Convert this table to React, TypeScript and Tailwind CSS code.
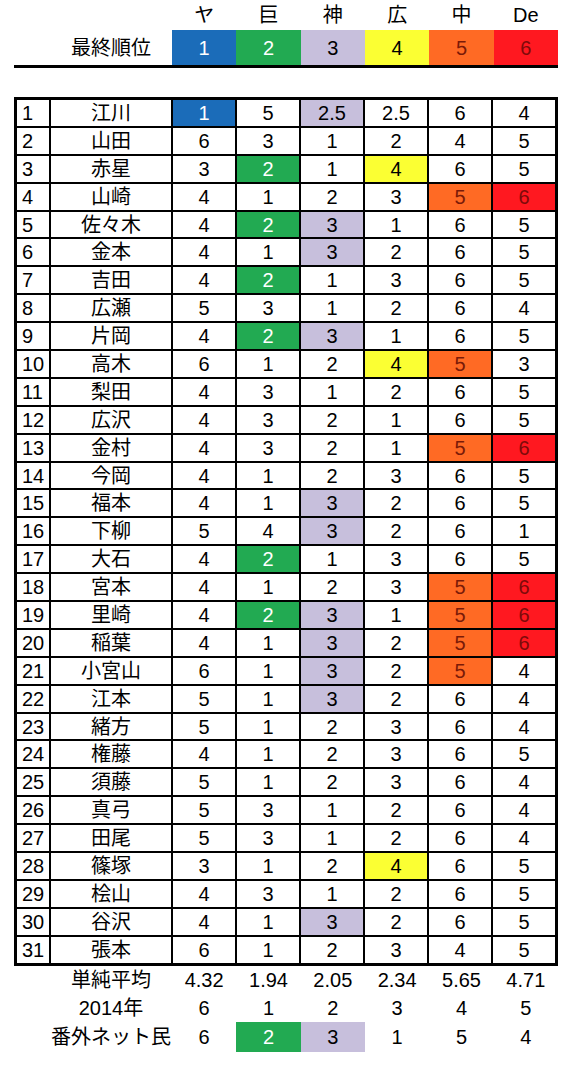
import React from 'react'

const teams = ['ヤ', '巨', '神', '広', '中', 'De']

// colour of a team's final rank cell: bg / text
const rankStyle = [
  'bg-[#1b6cb9] text-white',
  'bg-[#22aa52] text-white',
  'bg-[#c7bfdc] text-black',
  'bg-[#fbff33] text-black',
  'bg-[#ff6a24] text-[#7a1a08]',
  'bg-[#ff1820] text-[#7e0a0a]',
]

const rows: [string, string[]][] = [
  ['江川', ['1', '5', '2.5', '2.5', '6', '4']],
  ['山田', ['6', '3', '1', '2', '4', '5']],
  ['赤星', ['3', '2', '1', '4', '6', '5']],
  ['山崎', ['4', '1', '2', '3', '5', '6']],
  ['佐々木', ['4', '2', '3', '1', '6', '5']],
  ['金本', ['4', '1', '3', '2', '6', '5']],
  ['吉田', ['4', '2', '1', '3', '6', '5']],
  ['広瀬', ['5', '3', '1', '2', '6', '4']],
  ['片岡', ['4', '2', '3', '1', '6', '5']],
  ['高木', ['6', '1', '2', '4', '5', '3']],
  ['梨田', ['4', '3', '1', '2', '6', '5']],
  ['広沢', ['4', '3', '2', '1', '6', '5']],
  ['金村', ['4', '3', '2', '1', '5', '6']],
  ['今岡', ['4', '1', '2', '3', '6', '5']],
  ['福本', ['4', '1', '3', '2', '6', '5']],
  ['下柳', ['5', '4', '3', '2', '6', '1']],
  ['大石', ['4', '2', '1', '3', '6', '5']],
  ['宮本', ['4', '1', '2', '3', '5', '6']],
  ['里崎', ['4', '2', '3', '1', '5', '6']],
  ['稲葉', ['4', '1', '3', '2', '5', '6']],
  ['小宮山', ['6', '1', '3', '2', '5', '4']],
  ['江本', ['5', '1', '3', '2', '6', '4']],
  ['緒方', ['5', '1', '2', '3', '6', '4']],
  ['権藤', ['4', '1', '2', '3', '6', '5']],
  ['須藤', ['5', '1', '2', '3', '6', '4']],
  ['真弓', ['5', '3', '1', '2', '6', '4']],
  ['田尾', ['5', '3', '1', '2', '6', '4']],
  ['篠塚', ['3', '1', '2', '4', '6', '5']],
  ['桧山', ['4', '3', '1', '2', '6', '5']],
  ['谷沢', ['4', '1', '3', '2', '6', '5']],
  ['張本', ['6', '1', '2', '3', '4', '5']],
]

const hit = (v: string, i: number) => v === String(i + 1) || (i === 2 && v === '2.5')

// last item: which columns are coloured
const summary: [string, string[], number[]][] = [
  ['単純平均', ['4.32', '1.94', '2.05', '2.34', '5.65', '4.71'], []],
  ['2014年', ['6', '1', '2', '3', '4', '5'], []],
  ['番外ネット民', ['6', '2', '3', '1', '5', '4'], [1, 2]],
]

export default function App() {
  return (
    <div
      className="w-[576px] h-[1070px] bg-white text-black text-[20px] leading-none"
      style={{ fontFamily: "'Liberation Sans', Arial, 'Noto Sans CJK JP', sans-serif" }}
    >
      <div className="ml-[14px] w-[544px]">
        {/* team names */}
        <div className="grid grid-cols-[158px_repeat(6,1fr)] h-[30px]">
          <div />
          {teams.map((t) => (
            <div key={t} className="flex items-center justify-center">{t}</div>
          ))}
        </div>

        {/* final standings */}
        <div className="grid grid-cols-[36px_122px_repeat(6,1fr)] h-[35px] border-b-[3px] border-black box-content">
          <div />
          <div className="flex items-center justify-center">最終順位</div>
          {teams.map((t, i) => (
            <div key={t} className={`flex items-center justify-center ${rankStyle[i]}`}>{i + 1}</div>
          ))}
        </div>

        {/* prediction table */}
        <div className="mt-[29px] border-[3px] border-black">
          {rows.map(([name, vals], r) => (
            <div
              key={name}
              className={`grid grid-cols-[32px_122px_repeat(6,1fr)] h-[25.9px] box-content ${r > 0 ? 'border-t-2 border-black' : ''}`}
            >
              <div className="flex items-center pl-[5px]">{r + 1}</div>
              <div className="flex items-center justify-center border-l-2 border-black">{name}</div>
              {vals.map((v, i) => (
                <div
                  key={i}
                  className={`flex items-center justify-center border-l-2 border-black ${hit(v, i) ? rankStyle[i] : ''}`}
                >
                  {v}
                </div>
              ))}
            </div>
          ))}
        </div>

        {/* summary */}
        {summary.map(([label, vals, colored], r) => (
          <div
            key={label}
            className={`grid grid-cols-[36px_122px_repeat(6,1fr)] ${r === 2 ? 'h-[30px]' : 'h-[28px]'}`}
          >
            <div />
            <div className="flex items-center justify-center">{label}</div>
            {vals.map((v, i) => (
              <div
                key={i}
                className={`flex items-center justify-center ${colored.includes(i) ? rankStyle[i] : ''}`}
              >
                {v}
              </div>
            ))}
          </div>
        ))}
      </div>
    </div>
  )
}
